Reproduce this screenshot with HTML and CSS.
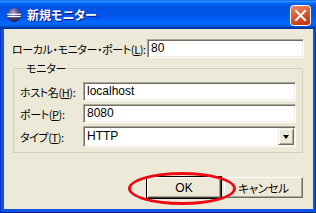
FILE: index.html
```html
<!DOCTYPE html>
<html lang="ja">
<head>
<meta charset="utf-8">
<link rel="stylesheet" href="styles.css">
</head>
<body>
<div class="window">
  <div class="titlebar">
    <svg class="appicon" width="16" height="16" viewBox="0 0 16 16">
      <defs>
        <radialGradient id="sph" cx="45%" cy="30%" r="75%">
          <stop offset="0" stop-color="#A9A6D2"/>
          <stop offset="0.5" stop-color="#4B4584"/>
          <stop offset="1" stop-color="#1F1946"/>
        </radialGradient>
      </defs>
      <circle cx="8" cy="8" r="7" fill="url(#sph)"/>
      <rect x="1.2" y="6.6" width="13.6" height="1.3" fill="#fff"/>
      <rect x="1.4" y="8.9" width="13.2" height="1.2" fill="#fff"/>
    </svg>
    <span class="title">新規モニター</span>
    <svg class="close" width="21" height="21" viewBox="0 0 21 21">
      <defs>
        <linearGradient id="cg" x1="0" y1="0" x2="0.3" y2="1">
          <stop offset="0" stop-color="#EC8C6E"/>
          <stop offset="0.5" stop-color="#DE5C36"/>
          <stop offset="1" stop-color="#C63D15"/>
        </linearGradient>
      </defs>
      <rect x="0.5" y="0.5" width="20" height="20" rx="3" fill="url(#cg)" stroke="#fff"/>
      <path d="M6 6 L15 15 M15 6 L6 15" stroke="#fff" stroke-width="2" stroke-linecap="square"/>
    </svg>
  </div>
  <div class="client">
    <div class="toprow">
      <span class="label">ローカル・モニター・ポート(<u>L</u>):</span>
      <div class="field wide">80</div>
    </div>
    <fieldset class="group">
      <legend>モニター</legend>
      <div class="grid">
        <span class="label">ホスト名(<u>H</u>):</span>
        <div class="field">localhost</div>
        <span class="label">ポート(<u>P</u>):</span>
        <div class="field">8080</div>
        <span class="label">タイプ(<u>T</u>):</span>
        <div class="field combo">
          <span class="combotext">HTTP</span>
          <span class="arrowbtn"><span class="tri"></span></span>
        </div>
      </div>
    </fieldset>
    <div class="buttons">
      <div class="btn default">OK<span class="ring"></span></div>
      <div class="btn cancel">キャンセル</div>
    </div>
  </div>
</div>
</body>
</html>
```
FILE: styles.css
```css
* { box-sizing: border-box; }
html, body { margin: 0; padding: 0; }
body {
  width: 316px;
  height: 213px;
  overflow: hidden;
  font-family: "Noto Sans CJK JP", "Noto Sans", sans-serif;
  font-size: 12px;
  font-feature-settings: "palt";
  color: #000;
}
.window {
  width: 316px;
  height: 213px;
  display: flex;
  flex-direction: column;
  background: #0A55E8;
  box-shadow: inset 1px 0 #0831C8, inset -1px 0 #0831C8, inset 0 -1px #001D8C;
}
.titlebar {
  height: 29px;
  flex: none;
  display: flex;
  align-items: center;
  padding-left: 6px;
  padding-right: 5px;
  background: linear-gradient(to bottom, #0058EE 0%, #3593FF 4%, #288EFF 6%, #127DFF 8%, #036FFC 10%, #0262EE 14%, #0057E5 20%, #0054E3 24%, #0055EB 56%, #005BF5 66%, #026AFE 76%, #0062EF 86%, #0052D6 92%, #0040AB 94%, #003092 100%);
}
.appicon { flex: none; margin-top: 1px; }
.title {
  margin-left: 5px;
  color: #fff;
  font-weight: bold;
  font-size: 12px;
  line-height: 14px;
  text-shadow: 1px 1px #0F1089;
  flex: 1;
}
.close { flex: none; margin-top: 1px; }
.client {
  flex: 1;
  margin: 0 3px 4px 4px;
  background: #ECE9D8;
  padding: 10px 9px 0 8px;
  display: flex;
  flex-direction: column;
}
.toprow {
  display: flex;
  align-items: center;
  justify-content: space-between;
  height: 19px;
}
.label {
  font-size: 11px;
  line-height: 14px;
  white-space: nowrap;
  letter-spacing: -0.4px;
}
.field {
  height: 19px;
  background: #fff;
  border-top: 1px solid #ACA899;
  border-left: 1px solid #ACA899;
  border-bottom: 1px solid #fff;
  border-right: 1px solid #fff;
  box-shadow: inset 1px 1px #716F64, inset -1px -1px #F1EFE2;
  padding-left: 3px;
  line-height: 16px;
  white-space: nowrap;
  font-family: "Liberation Sans", "Noto Sans", sans-serif;
}
.wide { width: 157px; }
.group {
  margin: 3px 1px 0 1px;
  padding: 7px 6px 5px 6px;
  border: 1px solid #D0D0BF;
  min-width: 0;
}
.group legend {
  padding: 0 1px;
  margin-left: 5px;
  font-size: 11px;
  line-height: 14px;
  letter-spacing: -0.2px;
}
.grid {
  display: grid;
  grid-template-columns: 63px 1fr;
  row-gap: 3px;
  align-items: center;
}
.combo {
  height: 21px;
  display: flex;
  align-items: center;
  padding-right: 1px;
  line-height: 17px;
}
.combotext { flex: 1; }
.arrowbtn {
  width: 16px;
  height: 17px;
  background: #ECE9D8;
  border-top: 1px solid #F1EFE2;
  border-left: 1px solid #F1EFE2;
  border-right: 1px solid #716F64;
  border-bottom: 1px solid #716F64;
  box-shadow: inset 1px 1px #fff, inset -1px -1px #ACA899;
  display: flex;
  align-items: center;
  justify-content: center;
}
.tri {
  width: 0;
  height: 0;
  border-left: 3.5px solid transparent;
  border-right: 3.5px solid transparent;
  border-top: 4px solid #000;
  margin-top: 1px;
}
.buttons {
  margin-top: 24px;
  margin-right: 1px;
  display: flex;
  justify-content: flex-end;
  gap: 3px;
}
.btn {
  height: 21px;
  background: #ECE9D8;
  border-top: 1px solid #fff;
  border-left: 1px solid #fff;
  border-right: 1px solid #716F64;
  border-bottom: 1px solid #716F64;
  box-shadow: inset -1px -1px #ACA899;
  display: flex;
  align-items: center;
  justify-content: center;
  line-height: 14px;
}
.default {
  position: relative;
  width: 74px;
  outline: 1px solid #000;
  outline-offset: 0;
  border-right-color: #404040;
  border-bottom-color: #404040;
  font-family: "Liberation Sans", "Noto Sans", sans-serif;
}
.cancel { width: 79px; font-size: 11.5px; letter-spacing: -0.3px; }
.ring {
  position: absolute;
  left: -20px;
  top: -6px;
  width: 108px;
  height: 33px;
  border: 3px solid #EE0A14;
  border-radius: 50%;
  pointer-events: none;
}
```
